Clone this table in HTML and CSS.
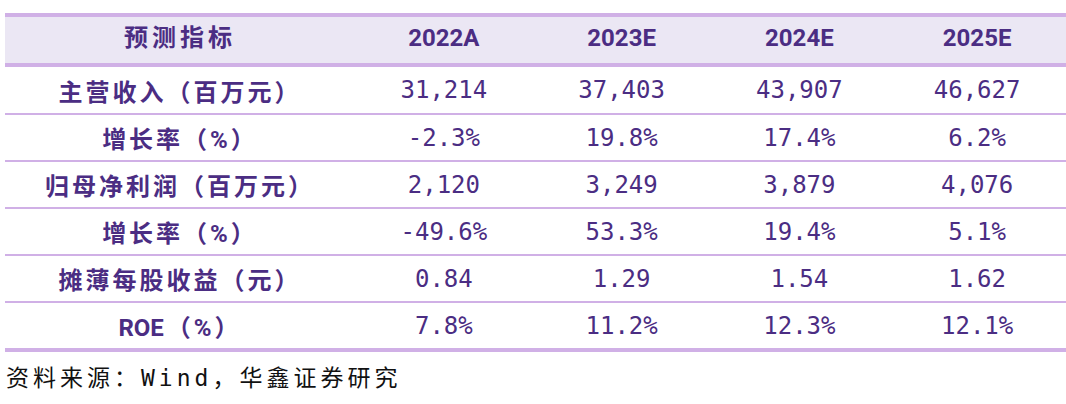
FILE: index.html
```html
<!DOCTYPE html>
<html lang="zh">
<head>
<meta charset="utf-8">
<title>预测指标</title>
<link rel="stylesheet" href="styles.css">
</head>
<body>
<table class="fc">
  <colgroup>
    <col class="c-label">
    <col class="c-val"><col class="c-val"><col class="c-val"><col class="c-val">
  </colgroup>
  <thead>
    <tr>
      <th class="lbl">预测指标</th>
      <th>2022A</th>
      <th>2023E</th>
      <th>2024E</th>
      <th>2025E</th>
    </tr>
  </thead>
  <tbody>
    <tr class="r1">
      <td class="lbl">主营收入（百万元）</td>
      <td>31,214</td><td>37,403</td><td>43,907</td><td>46,627</td>
    </tr>
    <tr>
      <td class="lbl">增长率（%）</td>
      <td>-2.3%</td><td>19.8%</td><td>17.4%</td><td>6.2%</td>
    </tr>
    <tr>
      <td class="lbl">归母净利润（百万元）</td>
      <td>2,120</td><td>3,249</td><td>3,879</td><td>4,076</td>
    </tr>
    <tr>
      <td class="lbl">增长率（%）</td>
      <td>-49.6%</td><td>53.3%</td><td>19.4%</td><td>5.1%</td>
    </tr>
    <tr>
      <td class="lbl">摊薄每股收益（元）</td>
      <td>0.84</td><td>1.29</td><td>1.54</td><td>1.62</td>
    </tr>
    <tr class="last">
      <td class="lbl"><span class="lat">ROE</span>（%）</td>
      <td>7.8%</td><td>11.2%</td><td>12.3%</td><td>12.1%</td>
    </tr>
  </tbody>
</table>
<p class="source">资料来源：Wind，华鑫证券研究</p>
</body>
</html>
```

FILE: styles.css
```css
html, body {
  margin: 0;
  padding: 0;
  background: #ffffff;
  overflow: hidden;
}

.fc {
  margin: 13px 0 0 5px;
  width: 1061px;
  border-collapse: collapse;
  table-layout: fixed;
  color: #4b2d83;
}

.c-label { width: 350px; }
.c-val { width: 177.75px; }

.fc th {
  height: 42px;
  padding: 0 0 4px 0;
  background: #ebe7f4;
  border-top: 4px solid #d0b0e6;
  border-bottom: 4px solid #d0b0e6;
  font-family: Roboto, "Noto Sans CJK SC", sans-serif;
  font-weight: 700;
  font-size: 24px;
  line-height: 30px;
  text-align: center;
  vertical-align: middle;
}

.fc td {
  height: 45px;
  padding: 0;
  border-bottom: 2px solid #d0b0e6;
  font-family: "DejaVu Sans Mono", "Noto Sans CJK SC", monospace;
  font-size: 24px;
  text-align: center;
  vertical-align: middle;
  white-space: nowrap;
}

.fc .r1 td { height: 46px; }

.fc .last td { border-bottom: 4px solid #d0b0e6; }

.fc .lbl {
  font-family: Roboto, "Noto Sans CJK SC", sans-serif;
  font-weight: 700;
  letter-spacing: 3px;
}

.fc .lbl .lat { letter-spacing: 0; margin-right: 3px; }

.fc th.lbl { letter-spacing: 4px; }

.source {
  margin: 12px 0 0 6px;
  font-family: "DejaVu Sans Mono", "Noto Sans CJK SC", monospace;
  font-size: 23px;
  line-height: 28px;
  letter-spacing: 4px;
  color: #111111;
}
```
